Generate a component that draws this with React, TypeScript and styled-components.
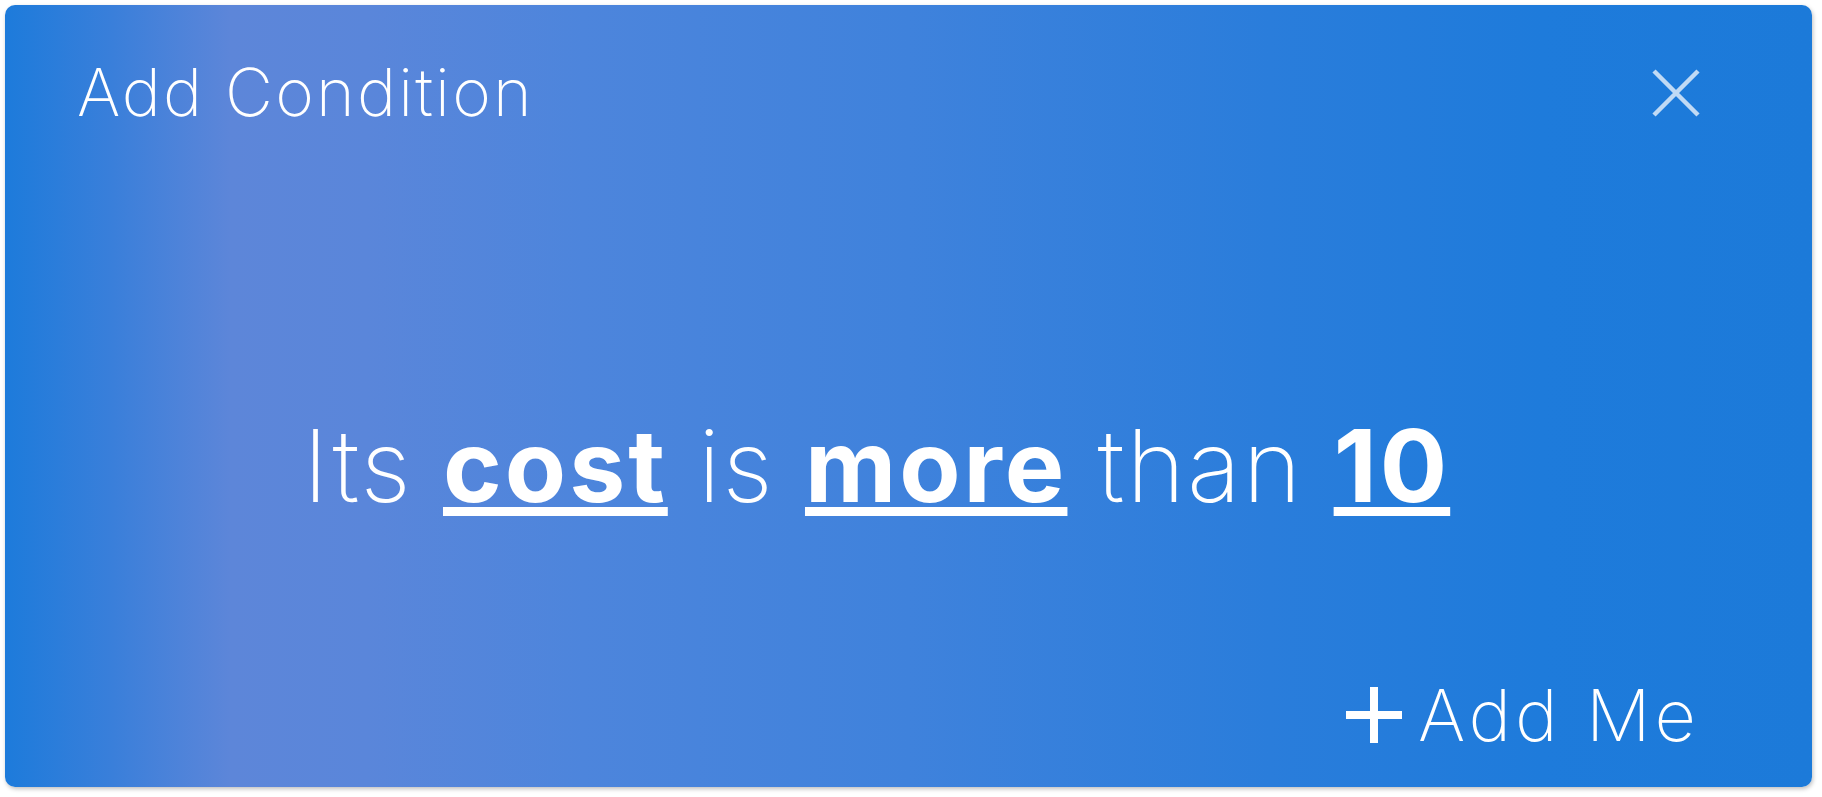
import React from 'react';
import styled, { createGlobalStyle } from 'styled-components';

const GlobalStyle = createGlobalStyle`
  html, body {
    margin: 0;
    padding: 0;
    background: #ffffff;
  }
  body {
    font-family: 'Inter', 'Noto Sans', sans-serif;
  }
`;

const Page = styled.div`
  padding: 5px 10px 10px 5px;
  height: 797px;
  box-sizing: border-box;
`;

const Card = styled.div`
  height: 100%;
  box-sizing: border-box;
  border-radius: 10px;
  background: linear-gradient(90deg, #1d7bdb 0%, #3a7fda 6%, #5d86d9 12.5%, #5a86da 20%, #4d85dc 32%, #3f82dc 50%, #2a7ddb 70%, #1e7bdb 85%, #1c7ad9 100%);
  box-shadow: 1px 2px 4px rgba(0, 0, 0, 0.25);
  color: #ffffff;
  display: flex;
  flex-direction: column;
  padding: 54px 112px 36px 72px;
`;

const Header = styled.div`
  display: flex;
  align-items: center;
  justify-content: space-between;
`;

const Title = styled.h2`
  margin: 0;
  font-size: 66px;
  font-weight: 200;
  line-height: 1;
  letter-spacing: 2.2px;
`;

const CloseButton = styled.button`
  background: none;
  border: none;
  padding: 0;
  width: 48px;
  height: 48px;
  margin-top: 2px;
  cursor: pointer;
  display: flex;
  align-items: center;
  justify-content: center;
`;

const Body = styled.div`
  flex: 1;
  display: flex;
  align-items: center;
  justify-content: center;
  padding: 128px 24px 0 0;
`;

const Sentence = styled.p`
  margin: 0;
  font-size: 100px;
  font-weight: 200;
  line-height: 1;
  letter-spacing: 2px;
  white-space: nowrap;
`;

const Token = styled.span`
  font-weight: 700;
  letter-spacing: 3px;
  text-decoration: underline;
  text-decoration-thickness: 9px;
  text-underline-offset: 5px;
  text-decoration-skip-ink: none;
`;

const Footer = styled.div`
  display: flex;
  justify-content: flex-end;
`;

const AddButton = styled.button`
  background: none;
  border: none;
  padding: 0;
  color: #ffffff;
  font-family: 'Inter', 'Noto Sans', sans-serif;
  font-size: 72px;
  font-weight: 200;
  line-height: 1;
  letter-spacing: 4px;
  display: flex;
  align-items: center;
  gap: 16px;
  cursor: pointer;
`;

const CloseIcon = () => (
  <svg width="48" height="48" viewBox="0 0 48 48">
    <path d="M2 2 L46 46 M46 2 L2 46" stroke="rgba(255,255,255,0.72)" strokeWidth="4.5" />
  </svg>
);

const PlusIcon = () => (
  <svg width="56" height="56" viewBox="0 0 56 56">
    <path d="M28 0 V56 M0 28 H56" stroke="#ffffff" strokeWidth="8" />
  </svg>
);

const App: React.FC = () => {
  return (
    <>
      <GlobalStyle />
      <Page>
        <Card>
          <Header>
            <Title>Add Condition</Title>
            <CloseButton aria-label="Close">
              <CloseIcon />
            </CloseButton>
          </Header>

          <Body>
            <Sentence>
              Its <Token>cost</Token> is <Token>more</Token> than <Token>10</Token>
            </Sentence>
          </Body>

          <Footer>
            <AddButton>
              <PlusIcon />
              Add Me
            </AddButton>
          </Footer>
        </Card>
      </Page>
    </>
  );
};

export default App;
